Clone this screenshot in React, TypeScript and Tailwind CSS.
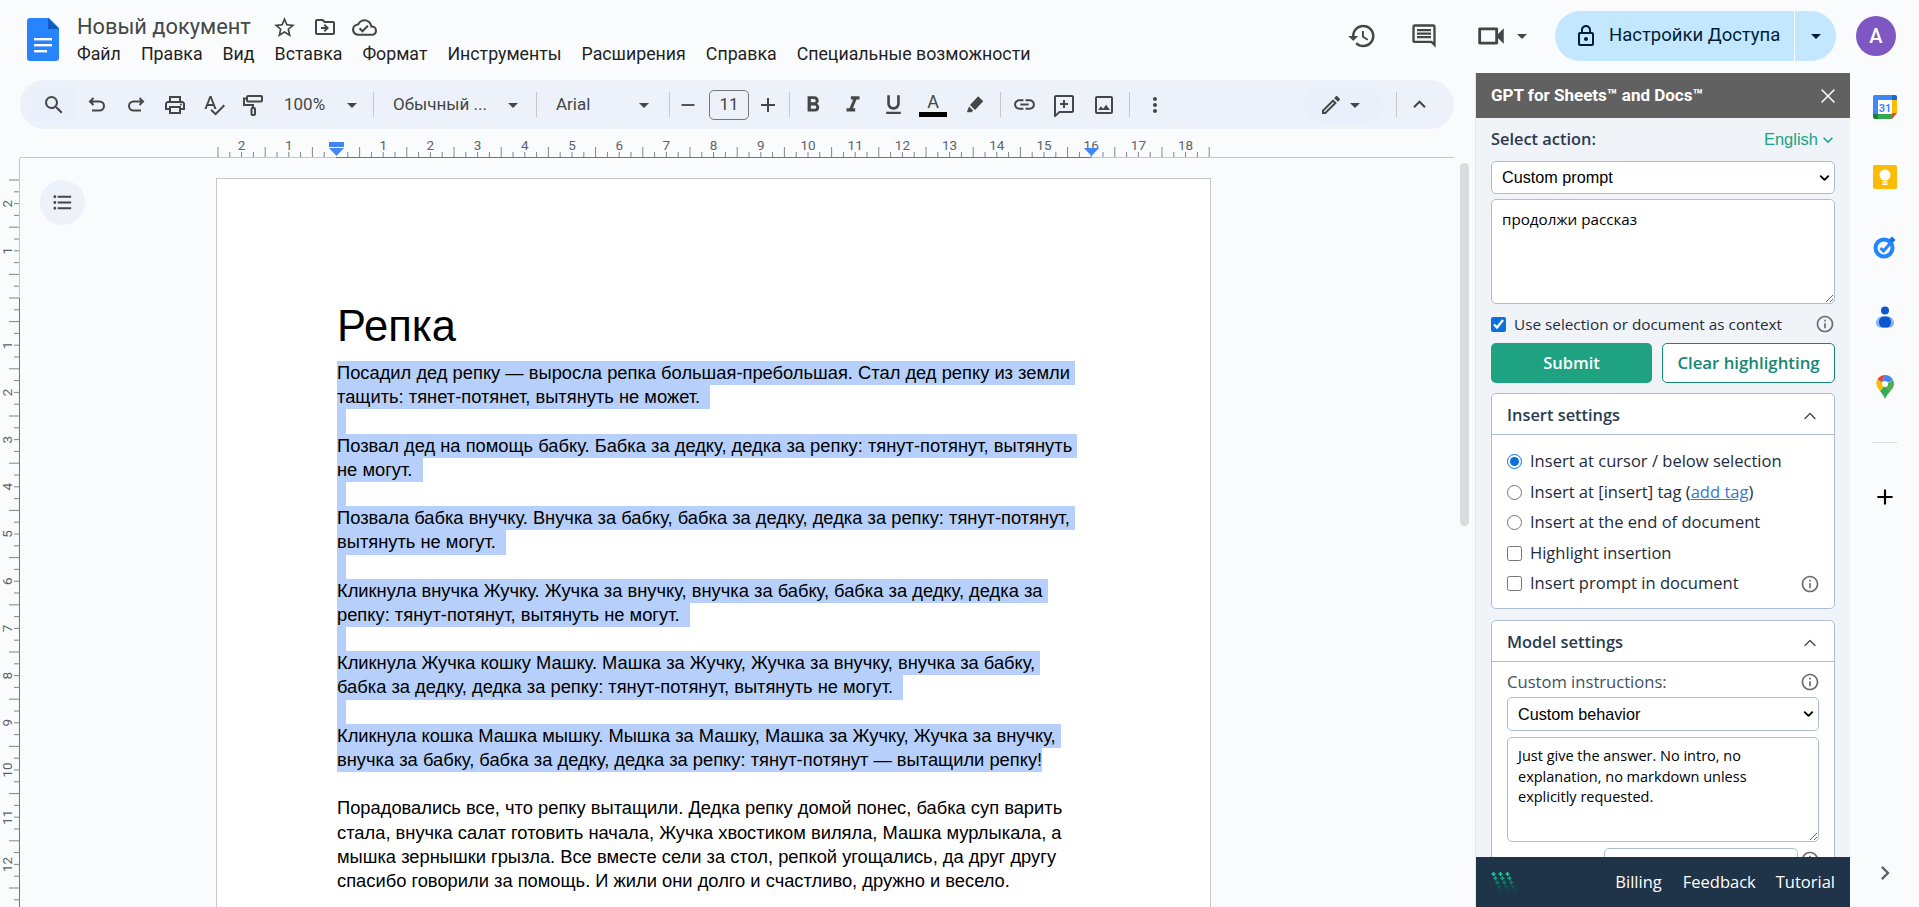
import type { ReactNode } from "react";
import { ChevronDown, ChevronUp, X } from "lucide-react";
import {
  MdAdd, MdArrowDropDown, MdChevronRight, MdExpandLess, MdFormatBold, MdFormatItalic,
  MdFormatListBulleted, MdFormatUnderlined, MdHistory, MdInfoOutline, MdKeyboardArrowDown, MdLink,
  MdLockOutline, MdMoreVert, MdOutlineCloudDone, MdOutlineComment,
  MdOutlineDriveFileMove, MdOutlineEdit, MdOutlineImage, MdOutlinePrint,
  MdOutlineVideocam, MdRemove, MdSearch, MdSpellcheck, MdStarBorder,
} from "react-icons/md";

const menu = ["Файл", "Правка", "Вид", "Вставка", "Формат", "Инструменты", "Расширения", "Справка", "Специальные возможности"];

const lines: { text: string; sel: boolean }[] = [
  { text: "Посадил дед репку — выросла репка большая-пребольшая. Стал дед репку из земли ", sel: true },
  { text: "тащить: тянет-потянет, вытянуть не может.  ", sel: true },
  { text: "", sel: true },
  { text: "Позвал дед на помощь бабку. Бабка за дедку, дедка за репку: тянут-потянут, вытянуть ", sel: true },
  { text: "не могут.  ", sel: true },
  { text: "", sel: true },
  { text: "Позвала бабка внучку. Внучка за бабку, бабка за дедку, дедка за репку: тянут-потянут, ", sel: true },
  { text: "вытянуть не могут.  ", sel: true },
  { text: "", sel: true },
  { text: "Кликнула внучка Жучку. Жучка за внучку, внучка за бабку, бабка за дедку, дедка за ", sel: true },
  { text: "репку: тянут-потянут, вытянуть не могут.  ", sel: true },
  { text: "", sel: true },
  { text: "Кликнула Жучка кошку Машку. Машка за Жучку, Жучка за внучку, внучка за бабку, ", sel: true },
  { text: "бабка за дедку, дедка за репку: тянут-потянут, вытянуть не могут.  ", sel: true },
  { text: "", sel: true },
  { text: "Кликнула кошка Машка мышку. Мышка за Машку, Машка за Жучку, Жучка за внучку, ", sel: true },
  { text: "внучка за бабку, бабка за дедку, дедка за репку: тянут-потянут — вытащили репку!", sel: true },
  { text: "", sel: false },
  { text: "Порадовались все, что репку вытащили. Дедка репку домой понес, бабка суп варить", sel: false },
  { text: "стала, внучка салат готовить начала, Жучка хвостиком виляла, Машка мурлыкала, а", sel: false },
  { text: "мышка зернышки грызла. Все вместе сели за стол, репкой угощались, да друг другу", sel: false },
  { text: "спасибо говорили за помощь. И жили они долго и счастливо, дружно и весело.", sel: false },
];

function Tool({ children, className = "w-[39px]" }: { children: ReactNode; className?: string }) {
  return <div className={`flex h-[35px] shrink-0 items-center justify-center text-[#444746] ${className}`}>{children}</div>;
}

function Sep({ className = "" }: { className?: string }) {
  return <div className={`h-[25px] w-px shrink-0 bg-[#c7c7c7] ${className}`} />;
}

function Glyph({ children }: { children: ReactNode }) {
  return (
    <svg width="24" height="24" viewBox="0 0 24 24" fill="none" stroke="currentColor" strokeWidth="2">
      {children}
    </svg>
  );
}

function DocsLogo() {
  return (
    <svg width="32" height="43" viewBox="0 0 32 43" className="shrink-0">
      <path d="M3 0h19l10 10v30a3 3 0 0 1-3 3H3a3 3 0 0 1-3-3V3a3 3 0 0 1 3-3z" fill="#2684fc" />
      <path d="M21 0l11 11H21z" fill="#0f5bc4" />
      <rect x="7" y="20" width="18" height="2.4" fill="#fff" />
      <rect x="7" y="26" width="18" height="2.4" fill="#fff" />
      <rect x="7" y="32" width="13" height="2.4" fill="#fff" />
    </svg>
  );
}

function TopRuler() {
  const ticks = [];
  for (let k = -10; k <= 74; k++) {
    const x = 336 + k * 11.8;
    if (k === 0) continue;
    const isCm = k % 4 === 0;
    const isHalf = k % 2 === 0 && !isCm;
    ticks.push(<line key={k} x1={x} x2={x} y1={isHalf ? 18 : 23} y2={28} stroke="#80868b" />);
    if (isCm) {
      ticks.push(
        <text key={`t${k}`} x={x} y={21} textAnchor="middle" fontSize="13.5" fill="#5f6368" fontFamily="Roboto, sans-serif">
          {Math.abs(k / 4)}
        </text>,
      );
    }
  }
  return (
    <svg width="1454" height="29" className="block shrink-0">
      <line x1="20" x2="1454" y1="28.5" y2="28.5" stroke="#c7c7c7" />
      <line x1="336" x2="1091" y1="28.5" y2="28.5" stroke="#70757a" />
      {ticks}
      <rect x="329" y="13" width="15" height="5" fill="#4285f4" />
      <path d="M329 19h15l-7.500 8z" fill="#4285f4" />
      <path d="M1084 19h15l-7.500 8z" fill="#4285f4" />
    </svg>
  );
}

function LeftRuler() {
  const ticks = [];
  for (let k = -10; k <= 51; k++) {
    const y = 140 + k * 11.8;
    const isCm = k % 4 === 0;
    const isHalf = k % 2 === 0 && !isCm;
    ticks.push(<line key={k} y1={y} y2={y} x1={isHalf || k === 0 ? 9 : 14} x2={19} stroke="#80868b" />);
    if (isCm && k !== 0) {
      ticks.push(
        <text key={`t${k}`} x={0} y={0} transform={`translate(12 ${y}) rotate(-90)`} textAnchor="middle" fontSize="13.5" fill="#5f6368" fontFamily="Roboto, sans-serif">
          {Math.abs(k / 4)}
        </text>,
      );
    }
  }
  return (
    <svg width="20" height="749" className="block shrink-0">
      <line x1="19.5" x2="19.5" y1="0" y2="749" stroke="#c7c7c7" />
      <line x1="19.5" x2="19.5" y1="140" y2="749" stroke="#70757a" />
      {ticks}
    </svg>
  );
}

function Info({ className = "" }: { className?: string }) {
  return <MdInfoOutline size={20} className={`shrink-0 text-[#6b6b6b] ${className}`} />;
}

function Option({ type, label, checked, children }: { type: "radio" | "checkbox"; label?: string; checked?: boolean; children?: ReactNode }) {
  return (
    <label className="flex h-[30.5px] items-center">
      <input type={type} name={type === "radio" ? "where" : undefined} defaultChecked={checked} className="m-0 h-[15px] w-[15px] shrink-0 accent-[#0b6fde]" />
      <span className="ml-[8px] text-[#1d2b3c]">{label}{children}</span>
    </label>
  );
}

function CardHeader({ title }: { title: string }) {
  return (
    <div className="flex h-[41px] items-center justify-between border-b border-[#adbdd0] pl-[15px] pr-[14px] pt-[3px]">
      <span className="text-[16.400px] font-semibold text-[#2a3b50]">{title}</span>
      <ChevronUp size={20} strokeWidth={1.500} className="text-[#444]" />
    </div>
  );
}

function Select({ value, className }: { value: string; className: string }) {
  return (
    <div className={`relative ${className}`}>
      <select className="block h-full w-full appearance-none rounded-[5px] border border-[#adbdd0] bg-white pl-[10px] font-['Liberation_Sans',sans-serif] text-[16.200px] text-black">
        <option>{value}</option>
      </select>
      <ChevronDown size={15} strokeWidth={3} className="pointer-events-none absolute right-[3px] top-1/2 -translate-y-1/2 text-black" />
    </div>
  );
}

function RailIcons() {
  return (
    <div className="-mt-px flex h-full flex-col items-center">
      <div className="flex h-[70px] items-center">
        <svg width="24" height="24" viewBox="0 0 24 24">
          <rect width="24" height="24" rx="2" fill="#fff" />
          <path d="M0 5V2a2 2 0 0 1 2-2h17v5z" fill="#4285f4" />
          <path d="M19 0h3a2 2 0 0 1 2 2v3h-5z" fill="#1967d2" />
          <path d="M19 5h5v13h-5z" fill="#fbbc04" />
          <path d="M0 5h5v14H0z" fill="#4285f4" />
          <path d="M5 19h14v5H5z" fill="#34a853" />
          <path d="M0 19h5v5H2a2 2 0 0 1-2-2z" fill="#188038" />
          <path d="M19 18h5l-5 6z" fill="#ea4335" />
          <text x="12" y="16.500" textAnchor="middle" fontSize="11" fontWeight="700" fill="#4285f4" fontFamily="Roboto, sans-serif">31</text>
        </svg>
      </div>
      <div className="flex h-[70px] items-center">
        <svg width="24" height="24" viewBox="0 0 24 24">
          <rect width="24" height="24" rx="2" fill="#fbbc04" />
          <circle cx="12" cy="10" r="5.500" fill="#fff" />
          <rect x="9.500" y="16" width="5" height="1.500" fill="#fff" />
          <rect x="9.500" y="18.500" width="5" height="1.500" fill="#fff" />
        </svg>
      </div>
      <div className="flex h-[70px] items-center">
        <svg width="24" height="24" viewBox="0 0 24 24">
          <circle cx="11" cy="13" r="8.500" fill="none" stroke="#2684fc" strokeWidth="4" />
          <path d="M7.500 13l3 3 7-8" fill="none" stroke="#2684fc" strokeWidth="3" />
          <path d="M19 1.500l3.500 3.500-3 3-3.500-3.500z" fill="#1a6fdc" />
        </svg>
      </div>
      <div className="flex h-[70px] items-center">
        <svg width="18" height="22" viewBox="0 0 18 22">
          <circle cx="9" cy="4.500" r="4" fill="#0b57d0" />
          <path d="M0 17c0-4 3-6.500 6-6.500h6c3 0 6 2.500 6 6.500 0 2.500-2 4.500-4 4.500H4c-2 0-4-2-4-4.500z" fill="#8ab4f8" />
          <path d="M3 16c0-3.500 2-5.500 6-5.500s6 2 6 5.500c0 3-1.500 5.500-4 5.500H7c-2.500 0-4-2.500-4-5.500z" fill="#0b57d0" />
        </svg>
      </div>
      <div className="flex h-[70px] items-center">
        <svg width="18" height="24" viewBox="0 0 18 24">
          <path d="M9 24c-1-3-3-5.500-5-8l5-6 5 6.500c-2 2.500-4 4.500-5 7.500z" fill="#34a853" />
          <path d="M1.500 4.500C-1 8 .5 12 4 16l5-6-3-3z" fill="#fbbc04" />
          <path d="M14 16.500C16.500 13.500 18 11.500 18 9a9 9 0 0 0-1-4l-8 5z" fill="#4caf50" />
          <path d="M1.500 4.500A9 9 0 0 1 9 0L6 7z" fill="#ea4335" />
          <path d="M9 0a9 9 0 0 1 8 5l-6 3-5-1z" fill="#4285f4" />
          <circle cx="9" cy="9" r="3" fill="#fff" />
        </svg>
      </div>
      <div className="mt-5 h-px w-[25px] bg-[#dadce0]" />
      <MdAdd size={26} className="mt-[41px] text-black" />
      <MdChevronRight size={28} className="mt-auto mb-[19px] text-[#5f6368]" />
    </div>
  );
}

function Sidebar() {
  return (
    <aside className="flex w-[375px] shrink-0 flex-col overflow-hidden border-l border-[#e3e7ec] bg-[#f0f4f9] font-['Open_Sans',sans-serif] text-[15px]">
      <div className="flex h-[45px] shrink-0 items-center justify-between bg-[#616161] pl-[15px] pr-[10px] font-['Roboto',sans-serif] text-white">
        <span className="text-[17px] font-bold">GPT for Sheets™ and Docs™</span>
        <X size={24} strokeWidth={1.500} />
      </div>
      <div className="min-h-0 flex-1 overflow-hidden px-[15px]">
        <div className="flex h-[43px] items-center justify-between">
          <span className="text-[16.400px] font-semibold text-[#2a3b50]">Select action:</span>
          <span className="flex items-center font-['Liberation_Sans',sans-serif] text-[16.500px] text-[#1aa385]">
            English
            <MdKeyboardArrowDown size={20} className="-mr-[3px]" />
          </span>
        </div>
        <Select value="Custom prompt" className="h-[33px]" />
        <textarea
          readOnly
          defaultValue="продолжи рассказ"
          className="mt-[5px] block h-[105px] w-full rounded-[5px] border border-[#adbdd0] bg-white px-[10px] py-[8px] text-[15.200px] leading-[22px] text-black"
        />
        <label className="mt-[9px] flex h-[22px] items-center">
          <input type="checkbox" defaultChecked className="m-0 h-[15px] w-[15px] accent-[#0b6fde]" />
          <span className="ml-[8px] text-[15.300px] text-[#1d2b3c]">Use selection or document as context</span>
          <Info className="ml-auto" />
        </label>
        <div className="mt-[8px] flex gap-[10px]">
          <button type="button" className="h-[40px] w-[161px] rounded-[5px] bg-[#1ea282] text-[16.500px] font-semibold text-white">Submit</button>
          <button type="button" className="h-[40px] flex-1 rounded-[5px] border border-[#13876f] bg-white text-[16.800px] font-semibold text-[#13876f]">Clear highlighting</button>
        </div>

        <section className="mt-[10px] h-[216px] rounded-[5px] border border-[#adbdd0] bg-white">
          <CardHeader title="Insert settings" />
          <div className="px-[15px] pt-[11.500px] text-[16.550px]">
            <Option type="radio" label="Insert at cursor / below selection" checked />
            <Option type="radio">
              Insert at [insert] tag (<span className="text-[#3b78c9] underline">add tag</span>)
            </Option>
            <Option type="radio" label="Insert at the end of document" />
            <Option type="checkbox" label="Highlight insertion" />
            <div className="flex items-center justify-between">
              <Option type="checkbox" label="Insert prompt in document" />
              <Info className="mr-[-1px]" />
            </div>
          </div>
        </section>

        <section className="mt-[11px] rounded-[5px] border border-[#adbdd0] bg-white">
          <CardHeader title="Model settings" />
          <div className="px-[15px] pt-[9px] text-[16.600px]">
            <div className="flex h-[22px] items-center justify-between text-[#3c4f66]">
              <span>Custom instructions:</span>
              <Info className="mr-[-1px]" />
            </div>
            <Select value="Custom behavior" className="mt-[4px] h-[34px]" />
            <textarea
              readOnly
              defaultValue="Just give the answer. No intro, no explanation, no markdown unless explicitly requested."
              className="mt-[6px] block h-[105px] w-full rounded-[5px] border border-[#adbdd0] bg-white px-[10px] py-[8px] text-[14.500px] leading-[20.500px] text-black"
            />
            <div className="mt-[6px] flex items-start justify-end">
              <div className="h-[40px] w-[194px] rounded-[5px] border border-[#adbdd0] bg-white" />
              <Info className="ml-[2px] mr-[-1px] mt-[2px]" />
            </div>
          </div>
        </section>
      </div>
      <div className="flex h-[50px] shrink-0 items-center bg-[#1f3349] px-[15px] text-[16.500px] text-white">
        <svg width="28" height="21" viewBox="0 0 28 21" className="shrink-0">
          {[0, 1, 2, 3, 4].map((r) =>
            [0, 1, 2].map((c) => {
              const x = 2.500 + c * 7 + r * 1.900;
              const y = 2 + r * 4.200;
              return (
                <path
                  key={`${r}-${c}`}
                  d={`M${x - 2} ${y}h4M${x} ${y - 2}v4`}
                  stroke={r === 0 ? "#12d39a" : r === 1 ? "#10a97e" : r === 2 ? "#0e7f68" : r === 3 ? "#105a55" : "#14474b"}
                  strokeWidth="1.500"
                />
              );
            }),
          )}
        </svg>
        <span className="ml-auto">Billing</span>
        <span className="ml-[21px]">Feedback</span>
        <span className="ml-[20px]">Tutorial</span>
      </div>
    </aside>
  );
}

export default function App() {
  return (
    <div className="flex h-screen w-full flex-col overflow-hidden bg-[#f9fbfd] font-['Roboto',sans-serif] text-[#1f1f1f]">
      {/* Title bar */}
      <header className="flex h-[73px] shrink-0 items-start">
        <div className="ml-[27px] mt-[18px]"><DocsLogo /></div>
        <div className="ml-[18px] pt-[13px]">
          <div className="flex h-[28px] items-center text-[#444746]">
            <span className="text-[21.800px]">Новый документ</span>
            <MdStarBorder size={25} className="ml-[21px]" />
            <MdOutlineDriveFileMove size={24} className="ml-[16px]" />
            <MdOutlineCloudDone size={25} className="ml-[15px]" />
          </div>
          <nav className="mt-[2px] flex h-[22px] items-center gap-[20px] text-[17.750px] whitespace-nowrap">
            {menu.map((m) => <span key={m}>{m}</span>)}
          </nav>
        </div>
        <div className="ml-auto flex h-[72px] items-center pr-[23px]">
          <MdHistory size={30} className="text-[#444746]" />
          <MdOutlineComment size={28} className="ml-[33px] text-[#444746]" />
          <MdOutlineVideocam size={34} className="ml-[36px] text-[#444746]" />
          <MdArrowDropDown size={24} className="ml-[2px] text-[#444746]" />
          <div className="ml-[21px] flex h-[50px] w-[281px] items-center overflow-hidden rounded-full bg-[#c2e7ff] text-[#001d35]">
            <div className="flex h-full w-[239px] items-center pl-[19px]">
              <MdLockOutline size={24} />
              <span className="ml-[11px] whitespace-nowrap text-[18.500px]">Настройки Доступа</span>
            </div>
            <div className="h-full w-px bg-[#f9fbfd]" />
            <div className="flex h-full flex-1 items-center justify-center"><MdArrowDropDown size={24} /></div>
          </div>
          <div className="ml-[20px] flex h-[40px] w-[40px] items-center justify-center rounded-full bg-[#7e57c2] text-[20px] font-medium text-white">A</div>
        </div>
      </header>

      <div className="flex min-h-0 flex-1">
        {/* Document area */}
        <main className="flex min-w-0 w-[1475px] shrink-0 flex-col overflow-hidden">
          <div className="ml-[20px] mr-[21px] mt-[7px] flex h-[49px] shrink-0 items-center rounded-full bg-[#edf2fa] pl-[11px] pr-[16px] text-[#444746]">
            <Tool className="w-[46px] bg-[#e9f0fb]"><MdSearch size={24} /></Tool>
            <Tool>
              <Glyph><path d="M8.500 5 5 8.500 8.500 12M5 8.500h9.500a4.500 4.500 0 0 1 0 9H7" /></Glyph>
            </Tool>
            <Tool>
              <Glyph><path d="M15.500 5 19 8.500 15.500 12M19 8.500H9.500a4.500 4.500 0 0 0 0 9H17" /></Glyph>
            </Tool>
            <Tool><MdOutlinePrint size={24} /></Tool>
            <Tool><MdSpellcheck size={24} /></Tool>
            <Tool>
              <Glyph>
                <rect x="6" y="3" width="15" height="5.500" rx="1" />
                <path d="M6 5.500H3v6.500h9v3" />
                <rect x="10.500" y="15" width="3.500" height="7" rx="1" />
              </Glyph>
            </Tool>
            <div className="flex w-[101px] shrink-0 items-center justify-between pl-[12px] pr-[9px] text-[17px]">100%<MdArrowDropDown size={24} /></div>
            <Sep />
            <div className="flex w-[162px] shrink-0 items-center justify-between pl-[19px] pr-[11px] text-[17px]">Обычный ...<MdArrowDropDown size={24} /></div>
            <Sep />
            <div className="flex w-[132px] shrink-0 items-center justify-between pl-[19px] pr-[13px] text-[17px]">Arial<MdArrowDropDown size={24} /></div>
            <Sep />
            <Tool className="w-[36px]"><MdRemove size={22} /></Tool>
            <div className="ml-[3px] flex h-[30px] w-[40px] shrink-0 items-center justify-center rounded-[5px] border border-[#747775] text-[17px]">11</div>
            <Tool className="w-[38px]"><MdAdd size={24} /></Tool>
            <Sep className="ml-[2px]" />
            <Tool className="ml-[3px] w-[40px]"><MdFormatBold size={26} /></Tool>
            <Tool className="w-[40px]"><MdFormatItalic size={26} /></Tool>
            <Tool className="w-[40px]"><MdFormatUnderlined size={25} /></Tool>
            <Tool className="w-[40px]">
              <div className="flex flex-col items-center">
                <span className="text-[18px] leading-[20px]">A</span>
                <div className="h-[5px] w-[28px] bg-black" />
              </div>
            </Tool>
            <Tool className="w-[44px]">
              <svg width="22" height="22" viewBox="0 0 24 24" fill="currentColor">
                <path d="M15.500 2.500 21 8l-9 9.500-5.500-5.500zM5.500 13.500l4.500 4.500-2 2H3.500v-1.500z" />
              </svg>
            </Tool>
            <Sep className="ml-[3px]" />
            <Tool className="ml-[3px] w-[40px]"><MdLink size={25} /></Tool>
            <Tool className="w-[40px]">
              <Glyph>
                <path d="M4 3h16a1 1 0 0 1 1 1v14a1 1 0 0 1-1 1H7.500L3 23V4a1 1 0 0 1 1-1zM12 7v8M8 11h8" />
              </Glyph>
            </Tool>
            <Tool className="w-[40px]"><MdOutlineImage size={24} /></Tool>
            <Sep className="ml-[5px]" />
            <Tool className="ml-[5px] w-[40px]"><MdMoreVert size={24} /></Tool>
            <div className="ml-auto flex h-[37px] w-[80px] shrink-0 items-center justify-center rounded-full bg-[#e9f0fb]">
              <MdOutlineEdit size={24} />
              <MdArrowDropDown size={24} />
            </div>
            <Sep className="ml-[13px]" />
            <Tool className="ml-[3px] w-[38px]"><MdExpandLess size={25} /></Tool>
          </div>

          <TopRuler />

          <div className="flex min-h-0 flex-1 overflow-hidden">
            <LeftRuler />
            <div className="w-[196px] shrink-0 pl-[20px] pt-[22px]">
              <div className="flex h-[45px] w-[45px] items-center justify-center rounded-full bg-[#edf2fa] text-[#444746]">
                <MdFormatListBulleted size={23} />
              </div>
            </div>
            <article className="mt-[20px] h-[1200px] w-[995px] shrink-0 border border-[#c7c7c7] bg-white pl-[120px] pt-[113px] font-['Liberation_Sans',sans-serif] text-black">
              <h1 className="h-[68px] text-[43.500px] leading-[68px]">Репка</h1>
              <div className="mt-[1px] text-[18.320px] leading-[24.200px]">
                {lines.map((l, i) => (
                  <div key={i} className="h-[24.200px] whitespace-pre">
                    {l.text ? (
                      <span className={l.sel ? "inline-block bg-[#b6d0fb]" : ""}>{l.text}</span>
                    ) : l.sel ? (
                      <span className="block h-full w-[9px] bg-[#b6d0fb]" />
                    ) : null}
                  </div>
                ))}
              </div>
            </article>
            <div className="ml-[249px] mt-[5px] h-[363px] w-[9px] shrink-0 rounded-full bg-[#dadce0]" />
          </div>
        </main>

        <Sidebar />

        <div className="min-w-0 flex-1"><RailIcons /></div>
      </div>
    </div>
  );
}
